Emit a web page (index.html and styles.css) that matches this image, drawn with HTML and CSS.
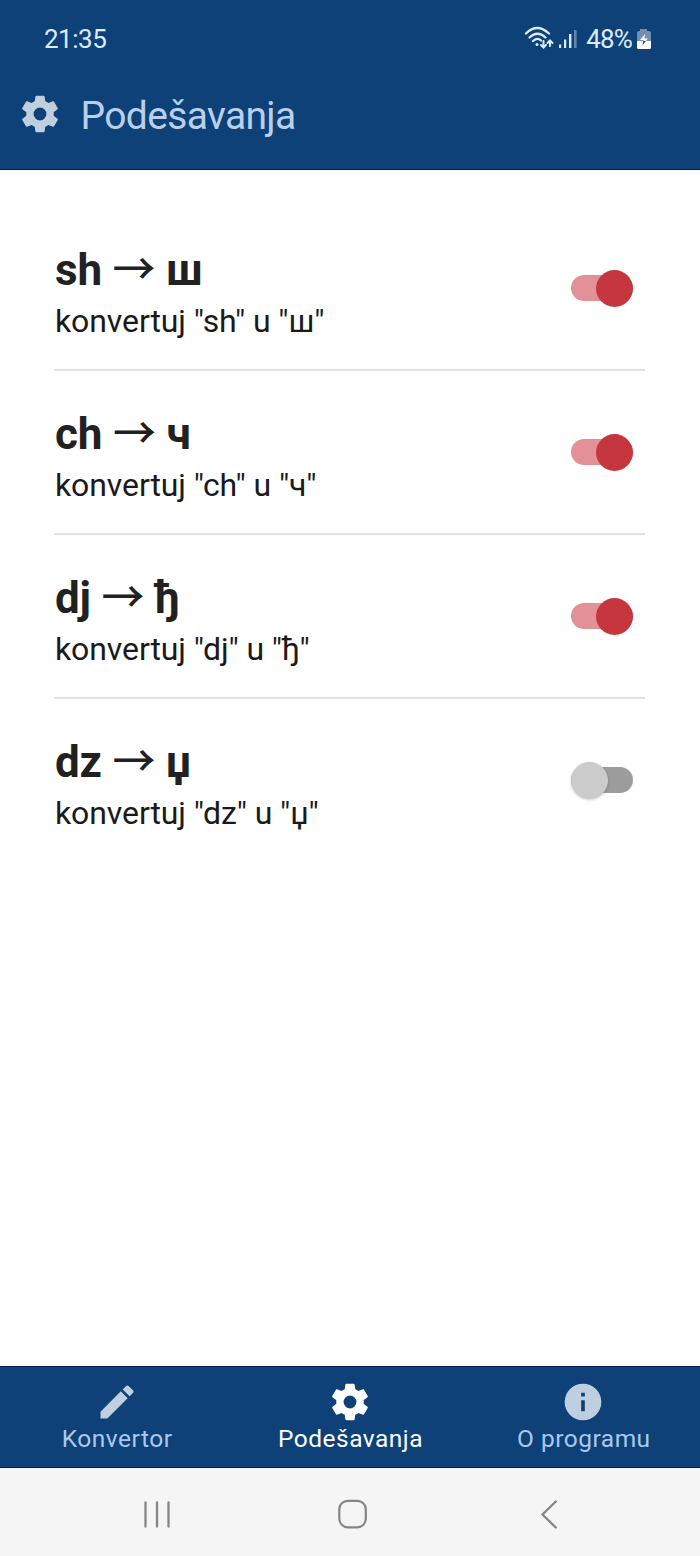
FILE: index.html
```html
<!DOCTYPE html>
<html lang="sr">
<head>
<meta charset="utf-8">
<title>Podešavanja</title>
<link rel="stylesheet" href="styles.css">
</head>
<body>
<div class="screen">
  <header class="header">
    <div class="status">
      <span class="time">21:35</span>
      <svg class="wifi" width="32" height="26" viewBox="0 0 32 26" fill="none" stroke="#dcecff" stroke-width="2.300" stroke-linecap="round">
        <path d="M2 7.500Q13-3.500 25 7.500M5.500 11.500Q13.500 4 21.500 11.500M9 15Q13.500 11 17 14.500"/>
        <circle cx="13" cy="18.500" r="1.500" fill="#dcecff" stroke="none"/>
        <path stroke-width="2" d="M19.500 15V21M17 19L19.500 21.500L22 19M26 20V14.500M23.500 17L26 14.500L28.500 17"/>
      </svg>
      <svg class="signal" width="20" height="20" viewBox="0 0 20 20" fill="#dcecff">
        <rect x="0" y="15.500" width="2.200" height="3.500"/><rect x="5" y="10.500" width="2.200" height="8.500"/><rect x="10" y="5" width="2.400" height="14"/><rect x="15" y="1" width="2.600" height="18" opacity=".4"/>
      </svg>
      <span class="percent">48%</span>
      <svg class="battery" width="16" height="22" viewBox="0 0 16 22">
        <path d="M4 1H11V3H13Q15 3 15 5V13H1V5Q1 3 3 3H4Z" fill="#6f8fb3"/>
        <path d="M1 13H15V19.500Q15 21 13.500 21H2.500Q1 21 1 19.500Z" fill="#fff"/>
        <path d="M9 6L4 12H7.500L6.500 17L12 10.500H8.500Z" fill="#fff"/>
        <path d="M7.300 13H10L6.500 17Z" fill="#0e4177"/>
      </svg>
    </div>
    <div class="title-bar">
      <svg class="icon" viewBox="0 0 24 24"><path d="M12,15.5A3.5,3.5 0 0,1 8.5,12A3.5,3.5 0 0,1 12,8.5A3.5,3.5 0 0,1 15.5,12A3.5,3.5 0 0,1 12,15.5M19.43,12.97C19.47,12.65 19.5,12.33 19.5,12C19.5,11.67 19.47,11.34 19.43,11L21.54,9.37C21.73,9.22 21.78,8.95 21.66,8.73L19.66,5.27C19.54,5.05 19.27,4.96 19.05,5.05L16.56,6.05C16.04,5.66 15.5,5.32 14.87,5.07L14.5,2.42C14.46,2.18 14.25,2 14,2H10C9.75,2 9.54,2.18 9.5,2.42L9.13,5.07C8.5,5.32 7.96,5.66 7.44,6.05L4.95,5.05C4.73,4.96 4.46,5.05 4.34,5.27L2.34,8.73C2.21,8.95 2.27,9.22 2.46,9.37L4.57,11C4.53,11.34 4.5,11.67 4.5,12C4.5,12.33 4.53,12.65 4.57,12.97L2.46,14.63C2.27,14.78 2.21,15.05 2.34,15.27L4.34,18.73C4.46,18.95 4.73,19.03 4.95,18.95L7.44,17.94C7.96,18.34 8.5,18.68 9.13,18.93L9.5,21.58C9.54,21.82 9.75,22 10,22H14C14.25,22 14.46,21.82 14.5,21.58L14.87,18.93C15.5,18.67 16.04,18.34 16.56,17.94L19.05,18.95C19.27,19.03 19.54,18.95 19.66,18.73L21.66,15.27C21.78,15.05 21.73,14.78 21.54,14.63L19.43,12.97Z"/></svg>
      <h1 class="title">Podešavanja</h1>
    </div>
  </header>

  <main class="list">
    <div class="row">
      <div><h2 class="rule">sh <span class="arrow">→</span> ш</h2><p class="hint">konvertuj "sh" u "ш"</p></div>
      <div class="toggle on"><div class="thumb"></div></div>
    </div>
    <div class="row">
      <div><h2 class="rule">ch <span class="arrow">→</span> ч</h2><p class="hint">konvertuj "ch" u "ч"</p></div>
      <div class="toggle on"><div class="thumb"></div></div>
    </div>
    <div class="row">
      <div><h2 class="rule">dj <span class="arrow">→</span> ђ</h2><p class="hint">konvertuj "dj" u "ђ"</p></div>
      <div class="toggle on"><div class="thumb"></div></div>
    </div>
    <div class="row">
      <div><h2 class="rule">dz <span class="arrow">→</span> џ</h2><p class="hint">konvertuj "dz" u "џ"</p></div>
      <div class="toggle"><div class="thumb"></div></div>
    </div>
  </main>

  <nav class="tabs">
    <div class="tab">
      <svg class="icon" viewBox="0 0 24 24"><path d="M20.71,7.04C21.1,6.65 21.1,6 20.71,5.63L18.37,3.29C18,2.9 17.35,2.9 16.96,3.29L15.12,5.12L18.87,8.87M3,17.25V21H6.75L17.81,9.93L14.06,6.18L3,17.25Z"/></svg>
      <span class="label">Konvertor</span>
    </div>
    <div class="tab active">
      <svg class="icon" viewBox="0 0 24 24"><path d="M12,15.5A3.5,3.5 0 0,1 8.5,12A3.5,3.5 0 0,1 12,8.5A3.5,3.5 0 0,1 15.5,12A3.5,3.5 0 0,1 12,15.5M19.43,12.97C19.47,12.65 19.5,12.33 19.5,12C19.5,11.67 19.47,11.34 19.43,11L21.54,9.37C21.73,9.22 21.78,8.95 21.66,8.73L19.66,5.27C19.54,5.05 19.27,4.96 19.05,5.05L16.56,6.05C16.04,5.66 15.5,5.32 14.87,5.07L14.5,2.42C14.46,2.18 14.25,2 14,2H10C9.75,2 9.54,2.18 9.5,2.42L9.13,5.07C8.5,5.32 7.96,5.66 7.44,6.05L4.95,5.05C4.73,4.96 4.46,5.05 4.34,5.27L2.34,8.73C2.21,8.95 2.27,9.22 2.46,9.37L4.57,11C4.53,11.34 4.5,11.67 4.5,12C4.5,12.33 4.53,12.65 4.57,12.97L2.46,14.63C2.27,14.78 2.21,15.05 2.34,15.27L4.34,18.73C4.46,18.95 4.73,19.03 4.95,18.95L7.44,17.94C7.96,18.34 8.5,18.68 9.13,18.93L9.5,21.58C9.54,21.82 9.75,22 10,22H14C14.25,22 14.46,21.82 14.5,21.58L14.87,18.93C15.5,18.67 16.04,18.34 16.56,17.94L19.05,18.95C19.27,19.03 19.54,18.95 19.66,18.73L21.66,15.27C21.78,15.05 21.73,14.78 21.54,14.63L19.43,12.97Z"/></svg>
      <span class="label">Podešavanja</span>
    </div>
    <div class="tab">
      <svg class="icon" viewBox="0 0 24 24"><path d="M13,9H11V7H13M13,17H11V11H13M12,2A10,10 0 0,0 2,12A10,10 0 0,0 12,22A10,10 0 0,0 22,12A10,10 0 0,0 12,2Z"/></svg>
      <span class="label">O programu</span>
    </div>
  </nav>

  <div class="system">
    <svg width="30" height="32" viewBox="0 0 30 32" stroke="#858585" stroke-width="2.300" stroke-linecap="round"><path d="M3.500 4.500V28.500M15 4.500V28.500M26.500 4.500V28.500"/></svg>
    <svg class="home" width="32" height="32" viewBox="0 0 32 32" fill="none" stroke="#858585" stroke-width="2.200"><rect x="2.300" y="2.800" width="26.500" height="26.500" rx="8.500"/></svg>
    <svg width="20" height="32" viewBox="0 0 20 32" fill="none" stroke="#858585" stroke-width="2.300" stroke-linecap="round"><path d="M15.800 3.500L2.500 16.500L15.800 29.500"/></svg>
  </div>
</div>
</body>
</html>
```
FILE: styles.css
```css
* { box-sizing: border-box; margin: 0; padding: 0; }
body { background: #fff; font-family: Roboto, "Liberation Sans", sans-serif; }
.screen { width: 700px; height: 1556px; display: flex; flex-direction: column; }
.header { height: 170px; background: #0e4177; border-bottom: 1px solid #06175a; }
.status { display: flex; align-items: center; height: 78px; padding: 0 48px 0 44px; color: #dcecff; font-size: 26px; }
.time { margin-right: auto; letter-spacing: -0.5px; }
.wifi { margin-right: 3px; }
.percent { margin: 0 4px 0 7px; letter-spacing: -0.8px; }
.title-bar { display: flex; align-items: center; height: 72px; padding-left: 18px; gap: 18.500px; color: #b9d0ec; }
.icon { display: block; width: 44px; height: 44px; fill: #c0cfdf; }
.title { font-size: 39px; font-weight: 400; line-height: 48px; padding-top: 4px; letter-spacing: -0.65px; }
.list { flex: 1; padding: 37px 55px 0 54px; }
.row { display: flex; justify-content: space-between; align-items: flex-start; height: 164px; padding: 37px 12px 0 1px; border-bottom: 2px solid #e2e2e2; }
.row:last-child { border-bottom: 0; }
.rule { font-size: 44px; font-weight: 700; line-height: 52px; letter-spacing: -0.2px; color: #212121; }
.arrow { font-family: "Noto Sans CJK JP", sans-serif; font-size: 43px; font-weight: 500; line-height: 1; }
.hint { margin-top: 5px; font-size: 32px; font-weight: 400; line-height: 40px; letter-spacing: -0.1px; color: #1a1a1a; }
.toggle { display: flex; align-items: center; width: 62px; height: 26px; margin-top: 31px; border-radius: 13px; background: #9c9c9c; }
.thumb { flex: none; width: 37px; height: 37px; border-radius: 50%; background: #cbcbcb; box-shadow: 0 1px 3px rgba(0, 0, 0, .2); }
.toggle.on { justify-content: flex-end; background: #e29297; }
.toggle.on .thumb { background: #c6363e; box-shadow: none; }
.tabs { display: grid; grid-template-columns: repeat(3, 1fr); height: 102px; background: #0e4177; border-top: 1px solid #06175a; border-bottom: 1px solid #06175a; }
.tab { display: flex; flex-direction: column; align-items: center; padding-top: 13px; color: #a9c8f0; }
.label { padding-left: 1px; font-size: 24.500px; line-height: 30px; letter-spacing: 0.5px; }
.active { color: #fff; }
.active .icon { fill: #fff; }
.system { display: flex; height: 88px; padding: 30px 140px 0 142px; justify-content: space-between; background: #f5f5f5; }
.home { margin-right: 7px; }
```
